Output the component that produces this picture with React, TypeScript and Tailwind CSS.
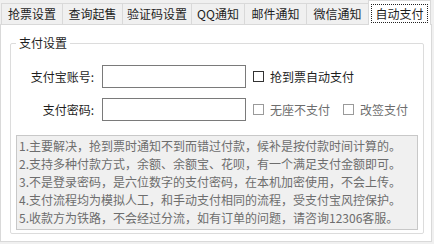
import React from 'react';

const tabs: { label: string; w: string }[] = [
  { label: '抢票设置', w: 'w-[61px]' },
  { label: '查询起售', w: 'w-[60px]' },
  { label: '验证码设置', w: 'w-[69px]' },
  { label: 'QQ通知', w: 'w-[53px]' },
  { label: '邮件通知', w: 'w-[62px]' },
  { label: '微信通知', w: 'w-[62px]' },
];

const notes: string[] = [
  '1.主要解决，抢到票时通知不到而错过付款，候补是按付款时间计算的。',
  '2.支持多种付款方式，余额、余额宝、花呗，有一个满足支付金额即可。',
  '3.不是登录密码，是六位数字的支付密码，在本机加密使用，不会上传。',
  '4.支付流程均为模拟人工，和手动支付相同的流程，受支付宝风控保护。',
  '5.收款方为铁路，不会经过分流，如有订单的问题，请咨询12306客服。',
];

const CheckBox = ({ label, disabled }: { label: string; disabled?: boolean }) => (
  <label className="flex items-center gap-[6px]">
    <span
      className={
        disabled
          ? 'block w-[11px] h-[11px] border border-[#9a9a9a] bg-white'
          : 'block w-[11px] h-[11px] border border-[#333333] bg-white'
      }
    />
    <span className={disabled ? 'text-[#6d6d6d]' : 'text-[#1e1e1e]'}>{label}</span>
  </label>
);

export default function App() {
  return (
    <div
      className="w-[434px] h-[244px] bg-[#f0f0f0] text-[12px] text-[#1e1e1e] overflow-hidden"
      style={{ fontFamily: '"Microsoft YaHei", "Noto Sans CJK SC", sans-serif' }}
    >
      {/* tab strip */}
      <div className="flex items-end h-[24px] pl-[1px]">
        {tabs.map((t) => (
          <div
            key={t.label}
            className={`${t.w} h-[21px] flex items-center justify-center border border-r-0 border-b-0 border-[#d9d9d9] bg-[#f0f0f0] leading-none`}
          >
            {t.label}
          </div>
        ))}
        <div className="relative z-10 -mb-px w-[63px] h-[25px] flex items-center justify-center border border-b-0 border-[#d9d9d9] bg-white">
          <span className="px-[3px] py-[1px] border border-dotted border-[#222] leading-[15px]">自动支付</span>
        </div>
      </div>

      {/* tab page */}
      <div className="w-[432px] h-[218px] bg-white border border-[#d9d9d9]">
        <fieldset className="ml-[9px] mt-[10px] w-[414px] h-[199px] border border-[#dcdcdc] rounded-[2px]">
          <legend className="ml-[5px] px-[3px] leading-[16px]">支付设置</legend>

          <div className="flex items-center mt-[14px] h-[23px]">
            <div className="w-[85px] text-right pr-[2px]">支付宝账号:</div>
            <div className="ml-[6px] w-[144px] h-[23px] border border-[#7a7a7a] bg-white" />
            <div className="ml-[7px]">
              <CheckBox label="抢到票自动支付" />
            </div>
          </div>

          <div className="flex items-center mt-[10px] h-[23px]">
            <div className="w-[85px] text-right pr-[2px]">支付密码:</div>
            <div className="ml-[6px] w-[144px] h-[23px] border border-[#7a7a7a] bg-white" />
            <div className="ml-[7px] flex items-center gap-[13px]">
              <CheckBox label="无座不支付" disabled />
              <CheckBox label="改签支付" disabled />
            </div>
          </div>

          <div className="ml-[5px] mt-[14px] w-[402px] h-[95px] border border-[#c8c8c8] bg-[#f0f0f0] pt-[1px] pl-[2px] text-[#6d6d6d] leading-[18px] whitespace-nowrap">
            {notes.map((n) => (
              <div key={n}>{n}</div>
            ))}
          </div>
        </fieldset>
      </div>
    </div>
  );
}
